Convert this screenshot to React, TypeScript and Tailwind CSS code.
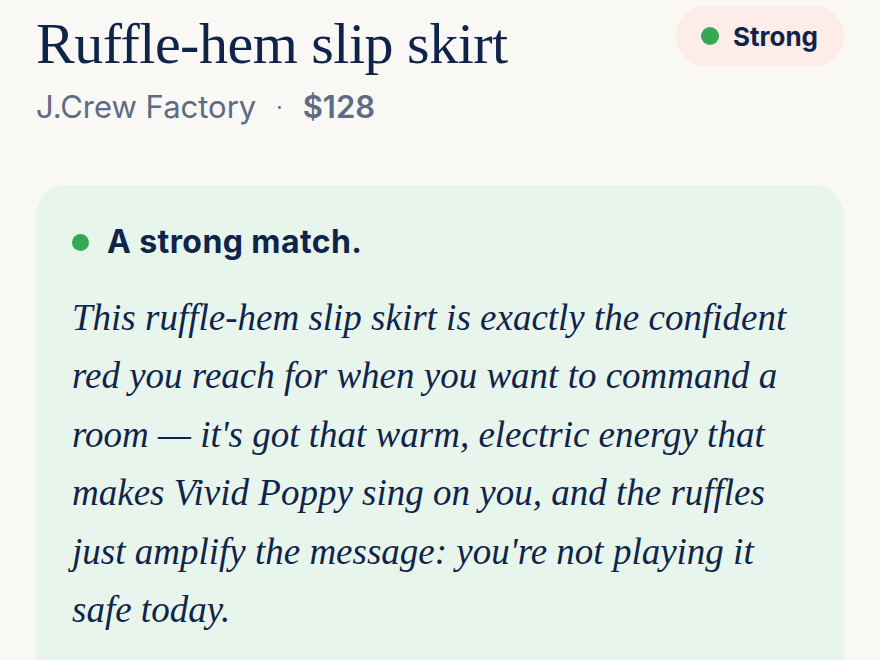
const serif = { fontFamily: '"Liberation Serif", "DejaVu Serif", serif' };

const lines = [
  "This ruffle-hem slip skirt is exactly the confident",
  "red you reach for when you want to command a",
  "room \u2014 it's got that warm, electric energy that",
  "makes Vivid Poppy sing on you, and the ruffles",
  "just amplify the message: you're not playing it",
  "safe today.",
];

const App = () => {
  return (
    <div
      className="h-screen w-full overflow-hidden bg-[#f9f8f4] px-9 pt-[6px] text-[#10244a]"
      style={{ fontFamily: 'Inter, "Noto Sans", sans-serif' }}
    >
      {/* Header */}
      <div className="flex items-start justify-between">
        <div>
          <h1
            className="mt-[3px] text-[58px] leading-[70px] tracking-[-0.5px] text-[#10244a]"
            style={serif}
          >
            Ruffle-hem slip skirt
          </h1>
          <p className="mt-[8px] flex items-center text-[31px] leading-[40px] text-[#5d6b85]">
            <span>J.Crew Factory</span>
            <span className="mx-[20px] text-[22px]">·</span>
            <span className="font-semibold">$128</span>
          </p>
        </div>
        <div className="flex h-[60px] items-center gap-[14px] rounded-full bg-[#fdece7] pl-[25px] pr-[26px]">
          <span className="h-[18px] w-[18px] rounded-full bg-[#34a853]" />
          <span className="text-[26px] font-bold text-[#10244a]">Strong</span>
        </div>
      </div>

      {/* Match card */}
      <div className="mt-[58px] h-[600px] rounded-[30px] bg-[#e8f5ec] px-9 pt-[39px]">
        <div className="flex items-center gap-[18px]">
          <span className="h-[17px] w-[17px] rounded-full bg-[#34a853]" />
          <span className="text-[32px] font-bold leading-[36px] tracking-[0.4px] text-[#10244a]">
            A strong match.
          </span>
        </div>
        <div className="mt-[29px] text-[37px] italic leading-[58.4px] text-[#10244a]" style={serif}>
          {lines.map((l) => (
            <div key={l} className="whitespace-nowrap">
              {l}
            </div>
          ))}
        </div>
      </div>
    </div>
  );
};

export default App;
